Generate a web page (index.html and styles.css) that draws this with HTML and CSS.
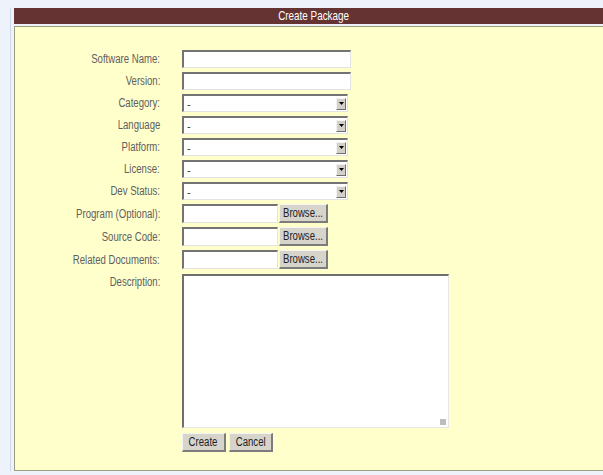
FILE: index.html
```html
<!DOCTYPE html>
<html>
<head>
<meta charset="utf-8">
<title>Create Package</title>
<link rel="stylesheet" href="styles.css">
</head>
<body>
<div class="frame">
  <div class="title"><span class="narrow">Create Package</span></div>
  <form class="panel">
    <div class="grid">
      <label class="lbl">Software Name:</label>
      <input class="text" type="text">

      <label class="lbl">Version:</label>
      <input class="text" type="text">

      <label class="lbl">Category:</label>
      <div class="select"><span class="val">-</span><span class="arrow"><svg width="5" height="3" viewBox="0 0 5 3"><path d="M0 0H5L2.5 3Z" fill="#000"/></svg></span></div>

      <label class="lbl">Language</label>
      <div class="select"><span class="val">-</span><span class="arrow"><svg width="5" height="3" viewBox="0 0 5 3"><path d="M0 0H5L2.5 3Z" fill="#000"/></svg></span></div>

      <label class="lbl">Platform:</label>
      <div class="select"><span class="val">-</span><span class="arrow"><svg width="5" height="3" viewBox="0 0 5 3"><path d="M0 0H5L2.5 3Z" fill="#000"/></svg></span></div>

      <label class="lbl">License:</label>
      <div class="select"><span class="val">-</span><span class="arrow"><svg width="5" height="3" viewBox="0 0 5 3"><path d="M0 0H5L2.5 3Z" fill="#000"/></svg></span></div>

      <label class="lbl">Dev Status:</label>
      <div class="select"><span class="val">-</span><span class="arrow"><svg width="5" height="3" viewBox="0 0 5 3"><path d="M0 0H5L2.5 3Z" fill="#000"/></svg></span></div>

      <label class="lbl">Program (Optional):</label>
      <div class="file"><span class="path"></span><span class="btn browse"><span class="narrow">Browse...</span></span></div>

      <label class="lbl">Source Code:</label>
      <div class="file"><span class="path"></span><span class="btn browse"><span class="narrow">Browse...</span></span></div>

      <label class="lbl">Related Documents:</label>
      <div class="file"><span class="path"></span><span class="btn browse"><span class="narrow">Browse...</span></span></div>

      <label class="lbl top">Description:</label>
      <div class="area"><span class="grip"></span></div>

      <span></span>
      <div class="actions">
        <span class="btn action"><span class="narrow">Create</span></span>
        <span class="btn action"><span class="narrow">Cancel</span></span>
      </div>
    </div>
  </form>
</div>
</body>
</html>
```

FILE: styles.css
```css
html, body {
  margin: 0;
  height: 100%;
  overflow: hidden;
}

body {
  background: #eef2fa;
  padding: 8px 0 0 10px;
  box-sizing: border-box;
  font-family: "Liberation Sans", Arial, sans-serif;
  font-size: 12px;
}

/* the UI face is a condensed sans; squeeze the glyphs horizontally */
.narrow {
  display: inline-block;
  transform: scaleX(0.8);
  transform-origin: center center;
  white-space: nowrap;
}

.frame {
  border-left: 1px solid #cfd8ea;
  padding-left: 3px;
  width: 600px;
}

.title {
  background: #663333;
  color: #ffffff;
  height: 16px;
  line-height: 16px;
  text-align: center;
  font-size: 13px;
}

.title .narrow {
  transform: scaleX(0.76);
}

.panel {
  display: block;
  margin: 2px 0 0;
  background: #ffffcc;
  border: 1px solid #9c9c80;
  height: 445px;
  box-sizing: border-box;
  padding-top: 23px;
}

.grid {
  display: grid;
  grid-template-columns: 145px auto;
  column-gap: 22px;
  row-gap: 4px;
  align-items: center;
  justify-items: start;
}

.lbl {
  justify-self: end;
  color: #606060;
  line-height: 14px;
  white-space: nowrap;
  transform: scaleX(0.8);
  transform-origin: right center;
}

.lbl.top {
  align-self: start;
  margin-top: 2px;
}

.text,
.select,
.path,
.area {
  box-sizing: border-box;
  background: #ffffff;
  border-style: solid;
  border-width: 2px 1px 1px 2px;
  border-color: #737373 #e3e3e3 #e3e3e3 #737373;
  margin: 0;
  padding: 0;
}

.text {
  width: 169px;
  height: 18px;
  display: block;
}

.select {
  width: 166px;
  height: 18px;
  display: flex;
  align-items: center;
  justify-content: space-between;
  padding: 0 1px 0 3px;
}

.val {
  color: #333;
  font-size: 11px;
  line-height: 12px;
}

.arrow {
  width: 10px;
  height: 12px;
  box-sizing: border-box;
  background: #d4d0c8;
  border-style: solid;
  border-width: 1px;
  border-color: #f2f2f2 #6e6e6e #6e6e6e #f2f2f2;
  display: flex;
  align-items: center;
  justify-content: center;
}

.file {
  display: flex;
  gap: 1px;
  height: 19px;
}

.path {
  width: 96px;
  height: 19px;
}

.btn {
  box-sizing: border-box;
  background: #d7d4cc;
  border-style: solid;
  border-width: 1px 2px 2px 1px;
  border-color: #f4f4f0 #7c7c7c #7c7c7c #f4f4f0;
  color: #222;
  display: flex;
  align-items: center;
  justify-content: center;
  font-size: 12px;
}

.browse {
  width: 49px;
  height: 19px;
}

.area {
  width: 267px;
  height: 154px;
  margin-top: 1px;
  position: relative;
  border-color: #6f6f6f #e6e6e6 #e6e6e6 #6f6f6f;
}

.grip {
  position: absolute;
  right: 2px;
  bottom: 2px;
  width: 6px;
  height: 6px;
  background-image: radial-gradient(circle, #b8b8b8 0.7px, transparent 0.8px);
  background-size: 2px 2px;
}

.actions {
  display: flex;
  gap: 3px;
  margin-top: 1px;
}

.action {
  width: 44px;
  height: 19px;
}
```
